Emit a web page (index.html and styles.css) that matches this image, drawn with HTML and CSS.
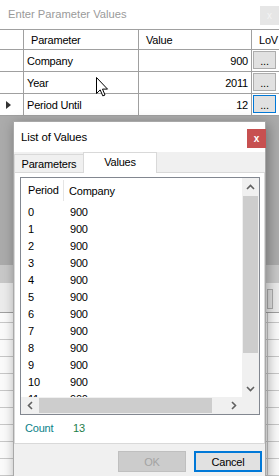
FILE: index.html
```html
<!DOCTYPE html>
<html>
<head>
<meta charset="utf-8">
<link rel="stylesheet" href="styles.css">
</head>
<body>
<div class="screen">
  <div class="bgwin">
    <div class="wtitle"><span class="wtitle-text">Enter Parameter Values</span><span class="wclose">x</span></div>
    <div class="dgrid">
      <div class="drow dhead">
        <div class="rh"></div><div class="cell">Parameter</div><div class="cell">Value</div><div class="cell clov">LoV</div>
      </div>
      <div class="drow">
        <div class="rh"></div><div class="cell">Company</div><div class="cell num">900</div><div class="cell clov"><span class="dots">...</span></div>
      </div>
      <div class="drow">
        <div class="rh"></div><div class="cell">Year</div><div class="cell num">2011</div><div class="cell clov"><span class="dots">...</span></div>
      </div>
      <div class="drow">
        <div class="rh"><span class="rarrow"></span></div><div class="cell">Period Until</div><div class="cell num">12</div><div class="cell clov"><span class="dots focus">...</span></div>
      </div>
    </div>
    <div class="gridspace"></div>
    <div class="toolstrip"></div>
    <div class="panel"><span class="pbtn"></span></div>
    <div class="lowerlist"></div>
  </div>

  <svg class="cursor" width="13" height="21" viewBox="0 0 13 21">
    <path d="M0.5 0.5 V16.5 L4.2 12.9 L6.8 18.9 L9 18 L6.5 12.1 H11.5 Z" fill="#fff" stroke="#000" stroke-width="1" stroke-linejoin="miter"/>
  </svg>

  <div class="dialog">
    <div class="dtitle">
      <span class="dtitle-text">List of Values</span>
      <span class="dclose">x</span>
    </div>
    <div class="dbody">
      <div class="tabs">
        <div class="tab">Parameters</div>
        <div class="tab sel">Values</div>
      </div>
      <div class="tabpage">
        <div class="lv">
          <div class="lv-content">
            <div class="lv-head">
              <div class="lv-c1 h">Period</div><div class="lv-c2 h">Company</div>
            </div>
            <div class="lv-row"><div class="lv-c1">0</div><div class="lv-c2">900</div></div>
            <div class="lv-row"><div class="lv-c1">1</div><div class="lv-c2">900</div></div>
            <div class="lv-row"><div class="lv-c1">2</div><div class="lv-c2">900</div></div>
            <div class="lv-row"><div class="lv-c1">3</div><div class="lv-c2">900</div></div>
            <div class="lv-row"><div class="lv-c1">4</div><div class="lv-c2">900</div></div>
            <div class="lv-row"><div class="lv-c1">5</div><div class="lv-c2">900</div></div>
            <div class="lv-row"><div class="lv-c1">6</div><div class="lv-c2">900</div></div>
            <div class="lv-row"><div class="lv-c1">7</div><div class="lv-c2">900</div></div>
            <div class="lv-row"><div class="lv-c1">8</div><div class="lv-c2">900</div></div>
            <div class="lv-row"><div class="lv-c1">9</div><div class="lv-c2">900</div></div>
            <div class="lv-row"><div class="lv-c1">10</div><div class="lv-c2">900</div></div>
            <div class="lv-row"><div class="lv-c1">11</div><div class="lv-c2">900</div></div>
          </div>
          <div class="vscroll">
            <div class="sarrow"><svg width="9" height="6" viewBox="0 0 9 6"><polyline points="1,5 4.5,1.5 8,5" fill="none" stroke="#606060" stroke-width="1.6"/></svg></div>
            <div class="vtrack"><div class="vthumb"></div></div>
            <div class="sarrow"><svg width="9" height="6" viewBox="0 0 9 6"><polyline points="1,1 4.5,4.5 8,1" fill="none" stroke="#606060" stroke-width="1.6"/></svg></div>
          </div>
          <div class="hscroll">
            <div class="sarrow"><svg width="6" height="9" viewBox="0 0 6 9"><polyline points="5,1 1.5,4.5 5,8" fill="none" stroke="#606060" stroke-width="1.6"/></svg></div>
            <div class="htrack"><div class="hthumb"></div></div>
            <div class="sarrow"><svg width="6" height="9" viewBox="0 0 6 9"><polyline points="1,1 4.5,4.5 1,8" fill="none" stroke="#606060" stroke-width="1.6"/></svg></div>
          </div>
          <div class="corner"></div>
        </div>
        <div class="countline"><span class="clabel">Count</span><span class="cval">13</span></div>
      </div>
      <div class="dbuttons">
        <div class="btn disabled">OK</div>
        <div class="btn primary">Cancel</div>
      </div>
    </div>
  </div>
</div>
</body>
</html>
```
FILE: styles.css
```css
* { box-sizing: border-box; }
html, body { margin: 0; padding: 0; }
body {
  width: 279px; height: 476px; overflow: hidden;
  font-family: "Liberation Sans", Arial, sans-serif;
  font-size: 11px; color: #000; background: #fff;
}
.screen { position: relative; width: 279px; height: 476px; overflow: hidden; }

/* background window */
.wtitle { height: 29px; display: flex; justify-content: space-between; align-items: flex-start; background: #fff; }
.wtitle-text { margin: 8px 0 0 8px; font-size: 11.2px; line-height: 13px; color: #9a9a9a; }
.wclose {
  width: 19px; height: 19px; margin-top: 6px; background: #e6e6e6; color: #f4f4f4;
  font-size: 10px; display: flex; align-items: center; justify-content: center;
}
.dgrid { border-top: 1px solid #a0a0a0; }
.drow { display: grid; grid-template-columns: 24px 115px 113px 1fr; height: 22px; }
.drow.dhead { height: 20px; }
.rh, .cell { border-right: 1px solid #a0a0a0; border-bottom: 1px solid #a0a0a0; }
.rh { display: flex; align-items: center; padding-left: 6px; }
.rarrow { width: 0; height: 0; border-left: 5px solid #333; border-top: 4.5px solid transparent; border-bottom: 4.5px solid transparent; }
.cell { display: flex; align-items: center; padding: 0 3px; white-space: nowrap; overflow: hidden; letter-spacing: -0.2px; }
.dhead .cell { padding-left: 7px; }
.num { justify-content: flex-end; }
.cell.clov { border-right: none; }
.drow:not(.dhead) .clov { padding: 1px 0 0 1px; align-items: flex-start; }
.dots {
  width: 23px; height: 18px; background: #e1e1e1; border: 1px solid #adadad;
  display: flex; align-items: center; justify-content: center; font-size: 11px; line-height: 11px; padding-top: 2px;
}
.dots.focus { border-color: #0078d7; }
.gridspace { height: 149px; background: #ababab; }
.toolstrip { height: 18px; background: #c8c8c8; }
.panel { height: 29px; background: #ececec; padding: 6px 0 0 267px; }
.pbtn { display: block; width: 6px; height: 20px; border: 1px solid #adadad; background: #e1e1e1; }
.lowerlist {
  height: 164px; border-top: 1px solid #a0a0a0;
  background:
    linear-gradient(to right, transparent 267px, #c8c8c8 267px, #c8c8c8 268px, transparent 268px) no-repeat,
    linear-gradient(to bottom, transparent 16px, #c8c8c8 16px) 0 -7px / 100% 17px repeat,
    #fbfbfb;
}

.cursor { position: absolute; left: 96px; top: 77px; }

/* dialog */
.dialog {
  position: absolute; left: 13px; top: 121px; width: 253px; height: 360px;
  border: 1px solid #a8a8a8; background: #f0f0f0;
  box-shadow: 2px 3px 12px rgba(0,0,0,0.35);
  display: flex; flex-direction: column;
}
.dtitle { height: 30px; background: #fff; display: flex; justify-content: space-between; align-items: flex-start; flex: none; }
.dtitle-text { margin: 9px 0 0 7px; font-size: 11.4px; line-height: 13px; letter-spacing: -0.1px; }
.dclose {
  width: 19px; height: 19px; margin: 7px -1px 0 0; background: #c75050; color: #fff;
  font-weight: bold; font-size: 10px; display: flex; align-items: center; justify-content: center;
}
.dbody { flex: 1; display: flex; flex-direction: column; }
.tabs { height: 20px; display: flex; align-items: flex-end; flex: none; }
.tab {
  height: 18px; border: 1px solid #d9d9d9; border-bottom: none; background: #f0f0f0;
  padding-top: 3px; line-height: 13px; text-align: center; letter-spacing: -0.2px;
}
.tab:first-child { width: 70px; }
.tab.sel { position: relative; z-index: 1; width: 74px; height: 21px; margin: 0 0 -1px -1px; background: #fff; padding-top: 3px; }
.tabpage {
  height: 272px; flex: none; background: #fff; border: 1px solid #d9d9d9;
  padding: 4px 4px 0 5px;
}
.lv {
  height: 238px; border: 1px solid #828790; background: #fff;
  display: grid; grid-template-columns: 1fr 17px; grid-template-rows: 1fr 17px;
}
.lv-content { overflow: hidden; }
.lv-head { display: flex; height: 25px; align-items: center; }
.lv-row { display: flex; height: 17px; align-items: center; }
.lv-c1 { width: 43px; padding-left: 7px; flex: none; letter-spacing: -0.2px; }
.lv-c2 { padding-left: 6px; letter-spacing: -0.2px; }
.lv-head .lv-c1 { border-right: 1px solid #e5e5e5; height: 21px; line-height: 21px; }
.lv-head .lv-c2 { padding-left: 5px; }
.vscroll { background: #f0f0f0; display: flex; flex-direction: column; }
.sarrow { width: 17px; height: 17px; display: flex; align-items: center; justify-content: center; flex: none; }
.vtrack { flex: 1; padding: 1px 1px 0 1px; }
.vthumb { height: 157px; background: #cdcdcd; }
.hscroll { background: #f0f0f0; display: flex; }
.htrack { flex: 1; padding: 1px 0 1px 1px; }
.hthumb { width: 173px; height: 100%; background: #cdcdcd; }
.corner { background: #f0f0f0; }
.countline { display: flex; margin-top: 7px; line-height: 13px; padding-left: 5px; letter-spacing: -0.2px; }
.clabel { width: 48px; color: #0a7f88; }
.cval { color: #1d7d4a; }
.dbuttons { display: flex; padding: 7px 0 0 104px; gap: 8px; }
.btn {
  width: 68px; height: 21px; display: flex; align-items: center; justify-content: center;
  letter-spacing: -0.2px;
}
.btn.disabled { background: #cccccc; border: 1px solid #bfbfbf; color: #a3a3a3; }
.btn.primary { background: #e1e1e1; border: 2px solid #0078d7; }
```
